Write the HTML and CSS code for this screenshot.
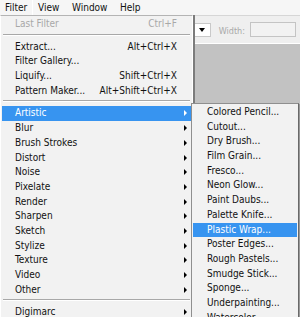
FILE: index.html
```html
<!DOCTYPE html>
<html>
<head>
<meta charset="utf-8">
<link rel="stylesheet" href="styles.css">
</head>
<body>
<div class="app">
  <nav class="menubar">
    <span class="mb-item pressed">Filter</span>
    <span class="mb-item">View</span>
    <span class="mb-item">Window</span>
    <span class="mb-item">Help</span>
  </nav>
  <div class="toolbar">
    <span class="dropdown"><span class="caret"></span></span>
    <span class="tb-label">Width:</span>
    <span class="tb-input"></span>
  </div>
  <div class="canvas"></div>

  <div class="menu main-menu">
    <div class="item disabled"><span class="label">Last Filter</span><span class="key">Ctrl+F</span><span class="sub"></span></div>
    <div class="sep"></div>
    <div class="item"><span class="label">Extract...</span><span class="key">Alt+Ctrl+X</span><span class="sub"></span></div>
    <div class="item"><span class="label">Filter Gallery...</span><span class="key"></span><span class="sub"></span></div>
    <div class="item"><span class="label">Liquify...</span><span class="key">Shift+Ctrl+X</span><span class="sub"></span></div>
    <div class="item"><span class="label">Pattern Maker...</span><span class="key">Alt+Shift+Ctrl+X</span><span class="sub"></span></div>
    <div class="sep"></div>
    <div class="item active"><span class="label">Artistic</span><span class="sub"><i class="arrow"></i></span></div>
    <div class="item"><span class="label">Blur</span><span class="sub"><i class="arrow"></i></span></div>
    <div class="item"><span class="label">Brush Strokes</span><span class="sub"><i class="arrow"></i></span></div>
    <div class="item"><span class="label">Distort</span><span class="sub"><i class="arrow"></i></span></div>
    <div class="item"><span class="label">Noise</span><span class="sub"><i class="arrow"></i></span></div>
    <div class="item"><span class="label">Pixelate</span><span class="sub"><i class="arrow"></i></span></div>
    <div class="item"><span class="label">Render</span><span class="sub"><i class="arrow"></i></span></div>
    <div class="item"><span class="label">Sharpen</span><span class="sub"><i class="arrow"></i></span></div>
    <div class="item"><span class="label">Sketch</span><span class="sub"><i class="arrow"></i></span></div>
    <div class="item"><span class="label">Stylize</span><span class="sub"><i class="arrow"></i></span></div>
    <div class="item"><span class="label">Texture</span><span class="sub"><i class="arrow"></i></span></div>
    <div class="item"><span class="label">Video</span><span class="sub"><i class="arrow"></i></span></div>
    <div class="item"><span class="label">Other</span><span class="sub"><i class="arrow"></i></span></div>
    <div class="sep"></div>
    <div class="item"><span class="label">Digimarc</span><span class="sub"><i class="arrow"></i></span></div>
  </div>

  <div class="menu sub-menu">
    <div class="item"><span class="label">Colored Pencil...</span></div>
    <div class="item"><span class="label">Cutout...</span></div>
    <div class="item"><span class="label">Dry Brush...</span></div>
    <div class="item"><span class="label">Film Grain...</span></div>
    <div class="item"><span class="label">Fresco...</span></div>
    <div class="item"><span class="label">Neon Glow...</span></div>
    <div class="item"><span class="label">Paint Daubs...</span></div>
    <div class="item"><span class="label">Palette Knife...</span></div>
    <div class="item active"><span class="label">Plastic Wrap...</span></div>
    <div class="item"><span class="label">Poster Edges...</span></div>
    <div class="item"><span class="label">Rough Pastels...</span></div>
    <div class="item"><span class="label">Smudge Stick...</span></div>
    <div class="item"><span class="label">Sponge...</span></div>
    <div class="item"><span class="label">Underpainting...</span></div>
    <div class="item"><span class="label">Watercolor...</span></div>
  </div>
</div>
</body>
</html>
```

FILE: styles.css
```css
* { box-sizing: border-box; }
html, body { margin: 0; padding: 0; }
body {
  font-family: "DejaVu Sans Condensed", "Liberation Sans", Arial, sans-serif;
  font-size: 10px;
  color: #111;
  background: #f3f3f3;
}
.app {
  position: relative;
  width: 300px;
  height: 317px;
  overflow: hidden;
  display: flex;
  flex-direction: column;
}
.menubar {
  display: flex;
  height: 15px;
  line-height: 15px;
  background: #f6f6f6;
  flex: none;
}
.mb-item {
  padding: 0 5px 0 5px;
  white-space: nowrap;
}
.mb-item.pressed {
  border-right: 1px solid #ffffff;
  padding-right: 4px;
  width: 33px;
}
.mb-item:nth-child(2) { width: 34px; }
.mb-item:nth-child(3) { width: 48px; }
.toolbar {
  flex: none;
  height: 29px;
  border-top: 1px solid #d6d6d6;
  border-bottom: 1px solid #ffffff;
  background: #efefef;
  display: flex;
  align-items: center;
  justify-content: flex-end;
  padding-right: 4px;
}
.dropdown {
  width: 17px;
  height: 14px;
  border: 1px solid #c9c9c9;
  background: #ffffff;
  display: flex;
  align-items: center;
  justify-content: center;
  margin-right: 8px;
}
.caret {
  width: 0;
  height: 0;
  border-left: 3.5px solid transparent;
  border-right: 3.5px solid transparent;
  border-top: 4px solid #000;
}
.tb-label {
  font-size: 9px;
  color: #a9a9a9;
  margin-right: 5px;
  margin-top: 2px;
}
.tb-input {
  width: 46px;
  height: 15px;
  border: 1px solid #c4c4c4;
  background: #f2f2f2;
}
.canvas {
  flex: 1;
  background: #c2c2c2;
}

.menu {
  position: absolute;
  background: #f2f2f2;
  padding: 1px;
}
.main-menu {
  left: 0;
  top: 15px;
  width: 193px;
  border-top: 1px solid #b4b4b4;
  border-left: 1px solid #ffffff;
  border-right: 1px solid #ffffff;
  box-shadow: 2px 0 0 #7c7c7c;
}
.sub-menu {
  left: 191px;
  top: 103px;
  width: 108px;
  border: 1px solid #8f8f8f;
  border-right-color: #6a6a6a;
  box-shadow: 1px 1px 0 #9a9a9a;
}
.item {
  display: flex;
  align-items: center;
  height: 14.7px;
  line-height: 14.7px;
  padding-left: 13px;
  white-space: nowrap;
}
.sub-menu .item { padding-left: 14px; }
.item .label { flex: 1; }
.item .key { text-align: right; }
.item .sub {
  width: 14px;
  height: 100%;
  position: relative;
  flex: none;
}
.arrow {
  position: absolute;
  left: 7px;
  top: 4px;
  width: 0;
  height: 0;
  border-top: 3px solid transparent;
  border-bottom: 3px solid transparent;
  border-left: 3px solid #000;
}
.item.active {
  background: #3794f0;
  color: #ffffff;
}
.item.active .arrow { border-left-color: #ffffff; }
.item.disabled { color: #a8a8a8; }
.sep {
  height: 2px;
  margin: 2px 1px 4px;
  border-top: 1px solid #a8a8a8;
  border-bottom: 1px solid #ffffff;
}
```
